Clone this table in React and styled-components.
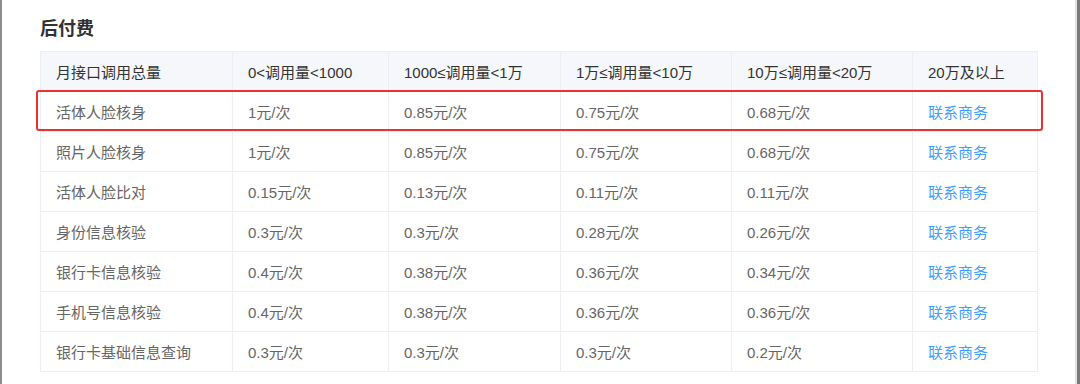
import React from "react";
import styled, { createGlobalStyle } from "styled-components";

const Global = createGlobalStyle`
  html, body {
    margin: 0;
    padding: 0;
    background: #fff;
  }
  body {
    font-family: "Liberation Sans", "Noto Sans CJK SC", sans-serif;
  }
`;

const Frame = styled.div`
  width: 1080px;
  height: 384px;
  box-sizing: border-box;
  border-left: 2px solid #8c8c8c;
  border-right: 3px solid #7a7a7a;
  box-shadow: inset -2px 0 0 #e2e2e2;
  padding: 18px 0 0 38px;
  overflow: hidden;
`;

const Title = styled.h3`
  margin: 0 0 11px;
  font-size: 18px;
  line-height: 22px;
  font-weight: 700;
  color: #303133;
`;

const TableWrap = styled.div`
  position: relative;
  width: 997px;
`;

const Table = styled.table`
  width: 100%;
  border-collapse: collapse;
  table-layout: fixed;
  font-size: 15px;
`;

const Th = styled.th`
  height: 39px;
  padding: 0 15px;
  text-align: left;
  font-weight: 400;
  color: #333;
  background: #f5f7fa;
  border: 1px solid #ebeef5;
  white-space: nowrap;
`;

const Td = styled.td`
  height: 39px;
  padding: 0 15px;
  color: ${(props) => (props.$link ? "#409eff" : "#666")};
  border: 1px solid #ebeef5;
  white-space: nowrap;
`;

const Highlight = styled.div`
  position: absolute;
  top: 39px;
  left: -4px;
  right: -6px;
  height: 41px;
  box-sizing: border-box;
  border: 2px solid #e8322f;
  border-radius: 3px;
  pointer-events: none;
`;

const widths = [192, 156, 172, 171, 181, 125];

const headers = [
  "月接口调用总量",
  "0<调用量<1000",
  "1000≤调用量<1万",
  "1万≤调用量<10万",
  "10万≤调用量<20万",
  "20万及以上",
];

const rows = [
  ["活体人脸核身", "1元/次", "0.85元/次", "0.75元/次", "0.68元/次"],
  ["照片人脸核身", "1元/次", "0.85元/次", "0.75元/次", "0.68元/次"],
  ["活体人脸比对", "0.15元/次", "0.13元/次", "0.11元/次", "0.11元/次"],
  ["身份信息核验", "0.3元/次", "0.3元/次", "0.28元/次", "0.26元/次"],
  ["银行卡信息核验", "0.4元/次", "0.38元/次", "0.36元/次", "0.34元/次"],
  ["手机号信息核验", "0.4元/次", "0.38元/次", "0.36元/次", "0.36元/次"],
  ["银行卡基础信息查询", "0.3元/次", "0.3元/次", "0.3元/次", "0.2元/次"],
];

export default function App() {
  return (
    <>
      <Global />
      <Frame>
        <Title>后付费</Title>
        <TableWrap>
          <Table>
            <colgroup>
              {widths.map((w, i) => (
                <col key={i} style={{ width: w }} />
              ))}
            </colgroup>
            <thead>
              <tr>
                {headers.map((h) => (
                  <Th key={h}>{h}</Th>
                ))}
              </tr>
            </thead>
            <tbody>
              {rows.map((r) => (
                <tr key={r[0]}>
                  {r.map((c, i) => (
                    <Td key={i}>{c}</Td>
                  ))}
                  <Td $link>联系商务</Td>
                </tr>
              ))}
            </tbody>
          </Table>
          <Highlight />
        </TableWrap>
      </Frame>
    </>
  );
}
